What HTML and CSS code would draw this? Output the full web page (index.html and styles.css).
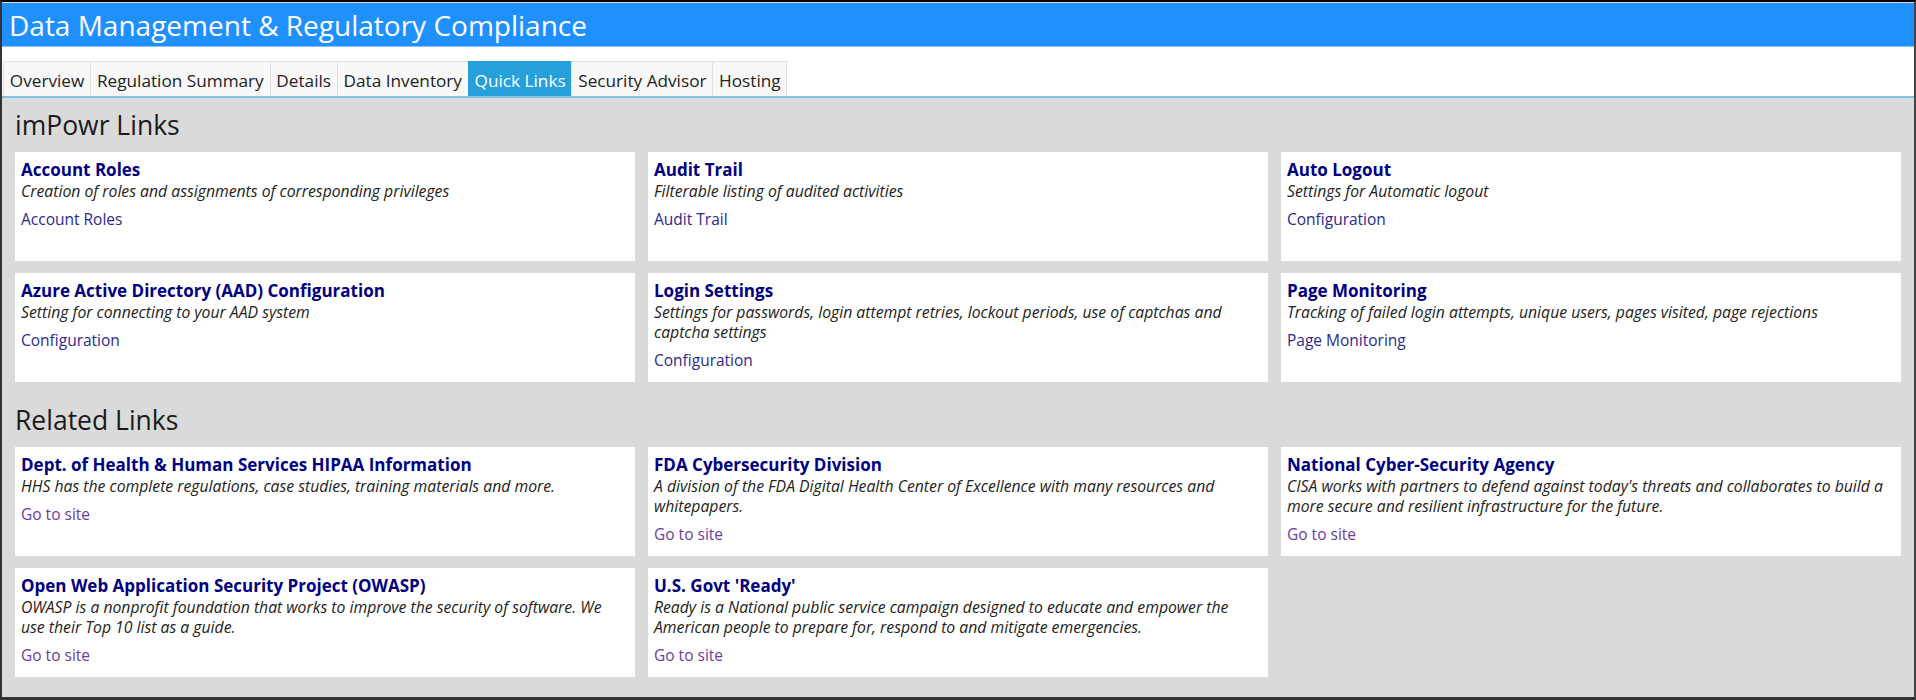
FILE: index.html
```html
<!DOCTYPE html>
<html lang="en">
<head>
<meta charset="utf-8">
<title>Data Management &amp; Regulatory Compliance</title>
<link rel="stylesheet" href="styles.css">
</head>
<body>
<div class="frame">
  <header class="app-header">
    <h1 class="app-title">Data Management &amp; Regulatory Compliance</h1>
  </header>
  <nav class="tabbar">
    <a class="tab" href="#">Overview</a>
    <a class="tab" href="#">Regulation Summary</a>
    <a class="tab" href="#">Details</a>
    <a class="tab" href="#">Data Inventory</a>
    <a class="tab active" href="#">Quick Links</a>
    <a class="tab" href="#">Security Advisor</a>
    <a class="tab" href="#">Hosting</a>
  </nav>
  <main class="content">
    <section class="section">
      <h2 class="section-title">imPowr Links</h2>
      <div class="grid">
        <div class="card">
          <div class="card-title">Account Roles</div>
          <div class="card-desc">Creation of roles and assignments of corresponding privileges</div>
          <a class="card-link" href="#">Account Roles</a>
        </div>
        <div class="card">
          <div class="card-title">Audit Trail</div>
          <div class="card-desc">Filterable listing of audited activities</div>
          <a class="card-link" href="#">Audit Trail</a>
        </div>
        <div class="card">
          <div class="card-title">Auto Logout</div>
          <div class="card-desc">Settings for Automatic logout</div>
          <a class="card-link" href="#">Configuration</a>
        </div>
        <div class="card">
          <div class="card-title">Azure Active Directory (AAD) Configuration</div>
          <div class="card-desc">Setting for connecting to your AAD system</div>
          <a class="card-link" href="#">Configuration</a>
        </div>
        <div class="card">
          <div class="card-title">Login Settings</div>
          <div class="card-desc">Settings for passwords, login attempt retries, lockout periods, use of captchas and captcha settings</div>
          <a class="card-link" href="#">Configuration</a>
        </div>
        <div class="card">
          <div class="card-title">Page Monitoring</div>
          <div class="card-desc">Tracking of failed login attempts, unique users, pages visited, page rejections</div>
          <a class="card-link" href="#">Page Monitoring</a>
        </div>
      </div>
    </section>
    <section class="section">
      <h2 class="section-title">Related Links</h2>
      <div class="grid">
        <div class="card">
          <div class="card-title">Dept. of Health &amp; Human Services HIPAA Information</div>
          <div class="card-desc">HHS has the complete regulations, case studies, training materials and more.</div>
          <a class="card-link visited" href="#">Go to site</a>
        </div>
        <div class="card">
          <div class="card-title">FDA Cybersecurity Division</div>
          <div class="card-desc">A division of the FDA Digital Health Center of Excellence with many resources and whitepapers.</div>
          <a class="card-link visited" href="#">Go to site</a>
        </div>
        <div class="card">
          <div class="card-title">National Cyber-Security Agency</div>
          <div class="card-desc">CISA works with partners to defend against today's threats and collaborates to build a more secure and resilient infrastructure for the future.</div>
          <a class="card-link visited" href="#">Go to site</a>
        </div>
        <div class="card">
          <div class="card-title">Open Web Application Security Project (OWASP)</div>
          <div class="card-desc">OWASP is a nonprofit foundation that works to improve the security of software. We use their Top 10 list as a guide.</div>
          <a class="card-link visited" href="#">Go to site</a>
        </div>
        <div class="card">
          <div class="card-title">U.S. Govt 'Ready'</div>
          <div class="card-desc">Ready is a National public service campaign designed to educate and empower the American people to prepare for, respond to and mitigate emergencies.</div>
          <a class="card-link visited" href="#">Go to site</a>
        </div>
      </div>
    </section>
  </main>
</div>
</body>
</html>
```

FILE: styles.css
```css
* { box-sizing: border-box; }

html, body {
  margin: 0;
  padding: 0;
  height: 100%;
}

body {
  font-family: "Open Sans", "Noto Sans", "Liberation Sans", sans-serif;
  color: #222;
  background: #fff;
}

.frame {
  height: 700px;
  display: flex;
  flex-direction: column;
  border-top: 2px solid #000;
  border-left: 2px solid #333;
  border-right: 2px solid #444;
  border-bottom: 3px solid #333;
  background: #fff;
}

.app-header {
  height: 45px;
  background: #1e90ff;
  border-top: 1px solid #d8d8d8;
  border-bottom: 1px solid #86c2ff;
  display: flex;
  align-items: center;
  padding-left: 7px;
}

.app-title {
  margin: 0;
  font-weight: 400;
  font-size: 28px;
  color: #fff;
  line-height: 1;
  padding-top: 1px;
}

.tabbar {
  display: flex;
  align-items: stretch;
  height: 51px;
  padding: 14px 0 0 1px;
  border-bottom: 2px solid #7fc3e6;
}

.tab {
  display: flex;
  align-items: center;
  padding: 2px 5.8px 0 5.8px;
  font-size: 17.2px;
  color: #222;
  text-decoration: none;
  background: #f8f8f8;
  border: 1px solid #e0e0e0;
  border-bottom: none;
  margin-right: -1px;
}

.tab.active {
  background: #26a0da;
  border-color: #26a0da;
  color: #fff;
}

.content {
  flex: 1;
  background: #dadada;
  padding: 9px 13px 0;
}

.section + .section {
  margin-top: 20px;
}

.section-title {
  margin: 0 0 9px;
  font-weight: 400;
  font-size: 26.5px;
  line-height: 36px;
  color: #1a1a1a;
}

.grid {
  display: grid;
  grid-template-columns: repeat(3, 1fr);
  column-gap: 13px;
  row-gap: 12px;
}

.card {
  background: #fff;
  min-height: 109px;
  padding: 6px 7px 8px 6px;
  display: flex;
  flex-direction: column;
  align-items: flex-start;
}

.card-title {
  font-weight: 700;
  font-size: 17px;
  line-height: 23px;
  color: #000080;
}

.card-desc {
  font-style: italic;
  font-size: 15.75px;
  line-height: 20px;
  color: #222;
}

.card-link {
  margin-top: 8px;
  font-size: 15.5px;
  line-height: 21px;
  color: #2a2a8c;
  text-decoration: none;
}

.card-link.visited {
  color: #6b3c9e;
}
```
